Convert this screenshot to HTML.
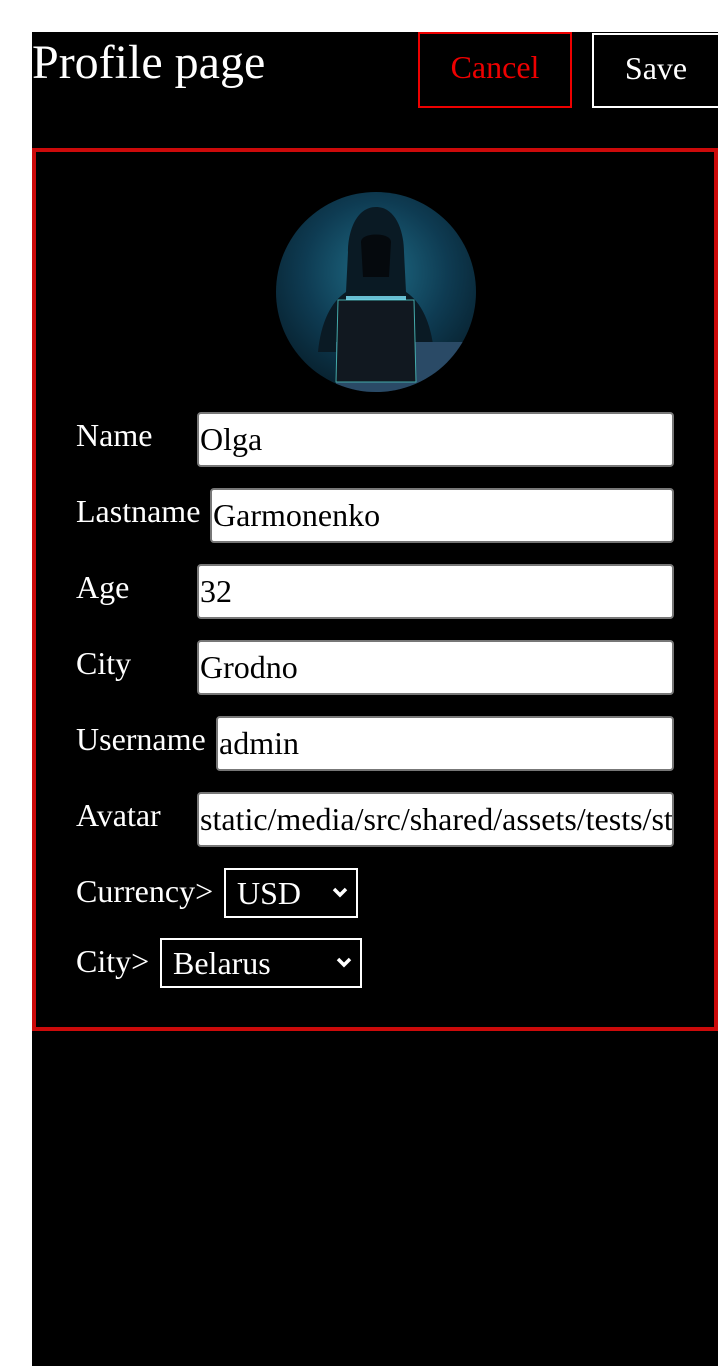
<!DOCTYPE html>
<html><head><style>
*{margin:0;padding:0;box-sizing:border-box}
body{width:718px;height:1366px;background:#fff;position:relative;overflow:hidden;font-family:"Liberation Serif",serif}
.bg{position:absolute;left:32px;top:32px;width:686px;height:1334px;background:#000}
.a{position:absolute}
.t{color:#fff;font-size:32px;line-height:1}
h1{position:absolute;left:32px;top:39px;font-weight:normal;font-size:48px;color:#fff;line-height:1}
.btn{position:absolute;top:32px;height:76px;font-size:32px;display:flex;align-items:center;justify-content:center;padding-bottom:5px}
.card{position:absolute;left:32px;top:148px;width:686px;height:883px;border:4px solid #cc0a0a}
.in{position:absolute;left:197px;width:477px;height:55px;background:#fff;border:2px solid #777;border-radius:4px;font-size:32px;color:#000;padding-left:1px;display:flex;align-items:center;white-space:nowrap;overflow:hidden}
.sel{position:absolute;height:50px;border:2px solid #fff;color:#fff;font-size:32px;display:flex;align-items:center;padding-left:11px}
.sel svg{position:absolute;right:8px;top:17px}
</style></head><body>
<div class="bg"></div>
<h1>Profile page</h1>
<div class="btn" style="left:418px;width:154px;border:2px solid #e00;color:#e00">Cancel</div>
<div class="btn" style="left:592px;width:126px;top:33px;height:75px;border:2px solid #fff;border-right:none;color:#fff">Save</div>
<div class="card"></div>
<svg class="a" style="left:276px;top:192px" width="200" height="200" viewBox="0 0 200 200">
<defs><radialGradient id="g" cx="50%" cy="40%" r="60%"><stop offset="0" stop-color="#1f6c86"/><stop offset="0.6" stop-color="#0e3b52"/><stop offset="1" stop-color="#082230"/></radialGradient>
<clipPath id="c"><circle cx="100" cy="100" r="100"/></clipPath></defs>
<g clip-path="url(#c)">
<rect width="200" height="200" fill="url(#g)"/>
<path d="M100 15 C80 15 72 40 72 60 L70 100 C55 110 45 130 42 160 L158 160 C155 130 145 110 130 100 L128 60 C128 40 120 15 100 15Z" fill="#0a1a24"/>
<path d="M85 50 C85 40 115 40 115 50 L113 85 L87 85Z" fill="#05090d"/>
<rect x="60" y="150" width="140" height="60" fill="#2a4a66"/>
<path d="M62 108 L138 108 L140 190 L60 190Z" fill="#111820" stroke="#4aa" stroke-width="1"/>
<rect x="70" y="104" width="60" height="4" fill="#7fe9ff" opacity=".8"/>
</g></svg>
<div class="a t" style="left:76px;top:419px">Name</div>
<div class="in" style="top:412px">Olga</div>
<div class="a t" style="left:76px;top:495px">Lastname</div>
<div class="in" style="top:488px;left:210px;width:464px">Garmonenko</div>
<div class="a t" style="left:76px;top:571px">Age</div>
<div class="in" style="top:564px">32</div>
<div class="a t" style="left:76px;top:647px">City</div>
<div class="in" style="top:640px">Grodno</div>
<div class="a t" style="left:76px;top:723px">Username</div>
<div class="in" style="top:716px;left:216px;width:458px">admin</div>
<div class="a t" style="left:76px;top:799px">Avatar</div>
<div class="in" style="top:792px">static/media/src/shared/assets/tests/storybook.jpg</div>
<div class="a t" style="left:76px;top:875px">Currency&gt;</div>
<div class="sel" style="left:224px;top:868px;width:134px">USD<svg width="16" height="12" viewBox="0 0 16 12"><path d="M2 2 L8 8 L14 2" stroke="#fff" stroke-width="3.5" fill="none"/></svg></div>
<div class="a t" style="left:76px;top:945px">City&gt;</div>
<div class="sel" style="left:160px;top:938px;width:202px">Belarus<svg width="16" height="12" viewBox="0 0 16 12"><path d="M2 2 L8 8 L14 2" stroke="#fff" stroke-width="3.5" fill="none"/></svg></div>
</body></html>
